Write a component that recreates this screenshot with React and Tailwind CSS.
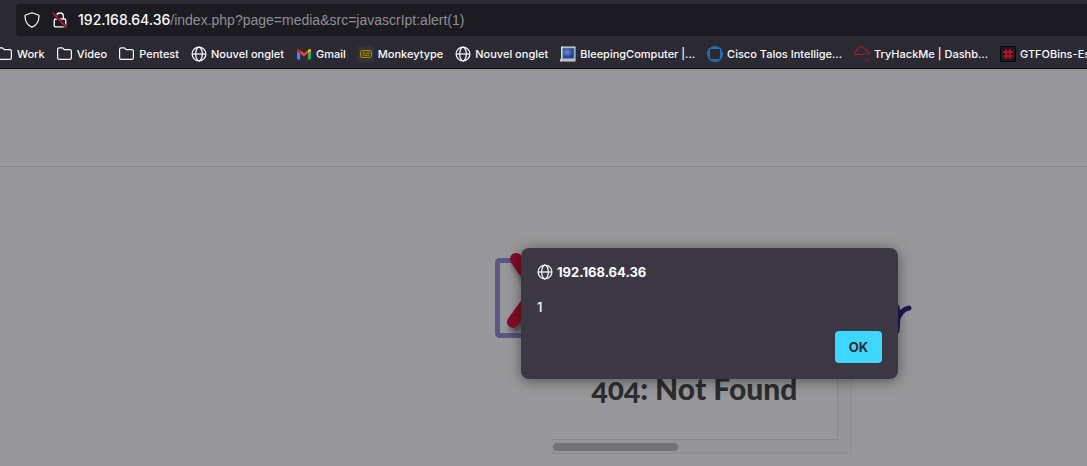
import React from 'react';

function Globe() {
  return (
    <svg viewBox="0 0 16 16" className="size-4 shrink-0" fill="none" stroke="currentColor" strokeWidth="1.25" aria-hidden="true">
      <circle cx="8" cy="8" r="6.9" />
      <ellipse cx="8" cy="8" rx="3.3" ry="6.9" />
      <path d="M1.1 8h13.8" />
    </svg>
  );
}

function Folder() {
  return (
    <svg viewBox="0 0 16 16" className="size-4 shrink-0" fill="none" stroke="currentColor" strokeWidth="1.2" strokeLinejoin="round" aria-hidden="true">
      <path d="M.6 11.8V3.400C.6 2.500 1.200 1.900 2.200 1.900H5.400L7.400 3.700h5.400c1 0 1.600.6 1.600 1.600v6.500c0 1-.6 1.600-1.600 1.600H2.200c-1 0-1.600-.6-1.600-1.600z" />
    </svg>
  );
}

function Gmail() {
  return (
    <svg viewBox="0 0 16 16" className="size-4 shrink-0" aria-hidden="true">
      <path fill="#4285f4" d="M1 5l3.200 2.400V13.500H2a1 1 0 0 1-1-1z" />
      <path fill="#34a853" d="M11.800 7.400L15 5v7.500a1 1 0 0 1-1 1h-2.200z" />
      <path fill="#fbbc04" d="M11.800 4.200l1-.8C13.700 2.700 15 3.300 15 4.500V5.200l-3.200 2.400z" />
      <path fill="#c5221f" d="M1 5.200V4.500c0-1.200 1.300-1.800 2.200-1.100l1 .8v3.400z" />
      <path fill="#ea4335" d="M4.200 4.200L8 7l3.800-2.800v3.400L8 10.500 4.200 7.600z" />
    </svg>
  );
}

function Monkeytype() {
  return (
    <svg viewBox="0 0 16 16" className="size-4 shrink-0" aria-hidden="true">
      <path fill="#323437" d="M0 0h16v16H0z" />
      <rect x="2.500" y="4.500" width="11" height="7" rx="1.700" fill="#4a421f" stroke="#a68b12" />
      <path fill="none" stroke="#b0941a" d="M4.500 7h2.500M8.500 7h3M4.500 9.200h1.200M6.500 9.200h3M10.300 9.200h1.200" />
    </svg>
  );
}

function Computer() {
  return (
    <svg viewBox="0 0 16 16" className="size-4 shrink-0" aria-hidden="true">
      <defs>
        <radialGradient id="screen" cx="38%" cy="40%">
          <stop offset="0" stopColor="#7187d6" />
          <stop offset="1" stopColor="#244190" />
        </radialGradient>
      </defs>
      <path fill="#d8dad6" d="M1 .5h14.500v15H0v-2l1-1z" />
      <path fill="url(#screen)" stroke="#7aa0b8" strokeWidth=".8" d="M2.700 2h11.500v10.700H2.700z" />
      <path stroke="#8b8f91" strokeWidth=".6" d="M1 14h14" />
    </svg>
  );
}

function Talos() {
  return (
    <svg viewBox="0 0 16 16" className="size-4 shrink-0" aria-hidden="true">
      <circle cx="8" cy="8" r="8" fill="#2a6ab4" />
      <rect x="3" y="3" width="10" height="10" rx="1" fill="#2b2a33" />
    </svg>
  );
}

function Cloud() {
  return (
    <svg viewBox="0 0 16 16" className="size-4 shrink-0" fill="none" stroke="#b81a26" strokeWidth="1.100" aria-hidden="true">
      <path d="M7 8.500H3.200C-.1 8.300.1 4.500 3 4.500 3.200-.2 9.500-.3 10.200 3.300c2.400-.5 3.600 1 3.300 2.700 1.800.3 2.200 1.700 1.300 2.500" />
      <path d="M9 7.500h3M7.500 8.500h2M13 8.500h2.500M9 13.500h2M12.500 13.500h3M11 15.300h3" opacity=".8" />
    </svg>
  );
}

function Hash() {
  return (
    <svg viewBox="0 0 16 16" className="size-4 shrink-0" aria-hidden="true">
      <path d="M0 0h16v16H0z" fill="#050507" />
      <path d="M1 1h14v14H1z" fill="#1c1a21" />
      <path d="M6 3v10M10 3v10M3 6h10M3 10h10" stroke="#b11220" strokeWidth="2" />
    </svg>
  );
}

const bookmarks = [
  ['Work', Folder],
  ['Video', Folder],
  ['Pentest', Folder],
  ['Nouvel onglet', Globe],
  ['Gmail', Gmail],
  ['Monkeytype', Monkeytype],
  ['Nouvel onglet', Globe],
  ['BleepingComputer |...', Computer],
  ['Cisco Talos Intellige...', Talos],
  ['TryHackMe | Dashb...', Cloud],
  ['GTFOBins-Es', Hash],
];

function AddressBar() {
  return (
    <div className="ml-4 flex h-8 items-center rounded-l bg-[#1c1b22] pl-2">
      <svg viewBox="0 0 16 16" className="size-4 shrink-0" fill="none" stroke="currentColor" strokeWidth="1.200" strokeLinejoin="round" aria-hidden="true">
        <path d="M8 .8L14.300 3c.5.200.7.500.7 1 0 5.200-2.400 9.200-7 11.300C3.400 13.200 1 9.200 1 4c0-.5.200-.8.700-1z" />
      </svg>
      <svg viewBox="0 0 16 16" className="ml-3 size-4 shrink-0" fill="none" stroke="currentColor" strokeWidth="1.300" aria-hidden="true">
        <path d="M4.600 7V4.400a3.400 3.400 0 0 1 6.800 0V7M3.600 7h8.800c.9 0 1.400.5 1.400 1.400v5c0 .9-.5 1.400-1.400 1.400H3.600c-.9 0-1.400-.5-1.400-1.400v-5C2.200 7.500 2.700 7 3.600 7z" />
        <path d="M1.500 1.500l13 14" stroke="#1c1b22" strokeWidth="3" />
        <path d="M1 1l13.500 14.500" stroke="#e2153e" strokeWidth="1.400" />
      </svg>
      <p className="ml-2.5 flex items-baseline text-sm whitespace-nowrap text-[#8f8f94]">
        <span className="font-medium text-[#fbfbfe]">192.168.64.36</span>
        <span className="font-['Liberation_Sans',sans-serif]">/index.php?page=media&amp;src=javascrIpt:alert(1)</span>
      </p>
    </div>
  );
}

function Logo() {
  return (
    <svg viewBox="0 0 417 86" className="h-[86px] w-[417px]" aria-hidden="true">
      <defs>
        <filter id="soft" x="-30%" y="-30%" width="160%" height="160%">
          <feDropShadow dx="3" dy="5" stdDeviation="3" floodColor="#000" floodOpacity=".5" />
        </filter>
      </defs>
      <rect x="2.500" y="7.500" width="75" height="75" rx="2" fill="none" stroke="#5b5788" strokeWidth="5" />
      <path d="M21 6L65 70M18 69L62 8" fill="none" stroke="#801125" strokeWidth="12" strokeLinecap="round" filter="url(#soft)" />
      <path d="M402 54c1 6 1 14 0 24M402 68c2-6 6-12 12-13" fill="none" stroke="#1c1853" strokeWidth="5" strokeLinecap="round" strokeLinejoin="round" />
    </svg>
  );
}

function AlertDialog() {
  return (
    <section role="alertdialog" aria-labelledby="origin" aria-describedby="message" className="absolute top-[179px] left-[521px] w-[377px] rounded-lg bg-[#3b3844] p-4 text-[#fbfbfe] shadow-[0_2px_14px_rgba(0,0,0,0.45)]">
      <div className="flex h-4 items-center gap-1">
        <Globe />
        <h2 id="origin" className="pt-px text-[13px] font-bold">192.168.64.36</h2>
      </div>
      <p id="message" className="mt-[19px] text-[13px] leading-4 font-medium">1</p>
      <div className="mt-4 flex justify-end">
        <button type="button" className="h-8 rounded bg-[#40d7ff] px-3.5 pt-px text-[13px] font-bold text-[#2b2a33]">OK</button>
      </div>
    </section>
  );
}

export default function App() {
  return (
    <div className="flex min-h-screen flex-col overflow-hidden bg-[#98989a] font-['Inter','Liberation_Sans',sans-serif]">
      <header className="border-b border-[#0c0c0d] bg-[#2b2a33] pt-1 text-[#fbfbfe]">
        <AddressBar />
        <nav className="-ml-[3px] flex h-8 items-center gap-3 pt-1">
          {bookmarks.map(([label, Icon], i) => (
            <a key={i} href="#" className="flex shrink-0 items-center gap-1 text-[11px] font-medium whitespace-nowrap">
              <Icon />
              {label}
            </a>
          ))}
        </nav>
      </header>
      <main className="relative flex-1">
        <div className="h-[98px] border-b border-[#858587]" />
        <div className="flex flex-col pt-[86px] pl-[495px]">
          <Logo />
          <div className="ml-[57px] flex w-[300px] flex-col border-r border-b border-[#8d8d8f] bg-[#959597]">
            <div className="mr-[13px] flex h-[101px] items-center justify-center border-r border-b border-[#88888a] bg-[#98989a]">
              <h1 className="pb-0.5 text-[30px] leading-9 font-black whitespace-nowrap text-[#2d2d2f] font-['Lato',sans-serif] [font-feature-settings:'onum']">404: Not Found</h1>
            </div>
            <div className="mt-[3px] mb-0.5 ml-px h-2 w-[125px] rounded-full bg-[#727274]" />
          </div>
        </div>
        <AlertDialog />
      </main>
    </div>
  );
}
